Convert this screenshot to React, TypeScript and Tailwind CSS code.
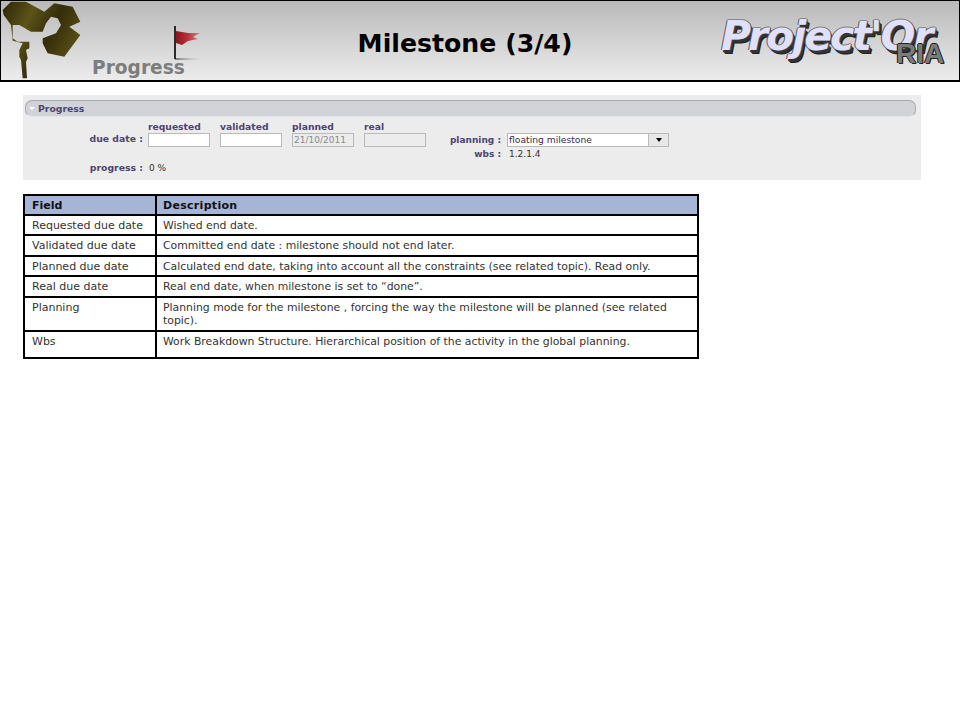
const rows: [string, string, string][] = [
  ["Requested due date", "Wished end date.", "h-[20px]"],
  ["Validated due date", "Committed end date : milestone should not end later.", "h-[21px]"],
  ["Planned due date", "Calculated end date, taking into account all the constraints (see related topic). Read only.", "h-[20px]"],
  ["Real due date", "Real end date, when milestone is set to “done”.", "h-[21px]"],
  ["Planning", "Planning mode for the milestone , forcing the way the milestone will be planned (see related topic).", "h-[34px]"],
  ["Wbs", "Work Breakdown Structure. Hierarchical position of the activity in the global planning.", "h-[27px]"],
];

function Spotlight() {
  return (
    <svg width="82" height="80" viewBox="0 0 240 240" className="shrink-0">
      <defs>
        <linearGradient id="sp" x1="0" y1="0" x2="1" y2="0.5">
          <stop offset="0" stopColor="#2a2408" />
          <stop offset="0.35" stopColor="#5c5318" />
          <stop offset="0.65" stopColor="#332d0a" />
          <stop offset="1" stopColor="#5a5016" />
        </linearGradient>
      </defs>
      <path
        fill="url(#sp)"
        d="M2 27 L27 2 L72 2 L127 32 L157 7 L212 17 L235 62 L202 77 L235 102 L187 167 L137 157 L132 147 L122 127 L122 112 L162 97 L177 72 L167 52 L147 47 L132 67 L122 92 L87 92 L52 72 L32 72 L32 112 L47 122 L82 122 L82 142 L72 147 L77 172 L72 182 L75 232 L62 232 L57 177 L52 167 L52 147 L62 127 L32 119 L27 72 L5 42 Z"
      />
    </svg>
  );
}

function Flag() {
  return (
    <svg width="30" height="36" viewBox="0 0 30 36" className="shrink-0">
      <defs>
        <linearGradient id="fl" x1="0" y1="0" x2="1" y2="0">
          <stop offset="0" stopColor="#8c141c" />
          <stop offset="0.5" stopColor="#b8353a" />
          <stop offset="1" stopColor="#d08a86" />
        </linearGradient>
        <linearGradient id="sh" x1="0" y1="0" x2="1" y2="0">
          <stop offset="0" stopColor="#777" />
          <stop offset="1" stopColor="#ccc" stopOpacity="0" />
        </linearGradient>
      </defs>
      <rect x="1" y="32" width="28" height="2" fill="url(#sh)" />
      <rect x="0" y="0" width="2" height="33" fill="#2b2b2b" />
      <path d="M2 5 L14 7 L26 7 L19 11 L24 13 L14 15 L8 19 L2 17 Z" fill="url(#fl)" />
    </svg>
  );
}

function Label({ children }: { children: React.ReactNode }) {
  return <div className="text-[9.2px] leading-[12px] font-bold text-[#4c4570] text-left">{children}</div>;
}

function FieldLabel({ children }: { children: React.ReactNode }) {
  return <div className="text-[9.3px] leading-[12px] font-bold text-[#4c4570] text-right pr-[5px]">{children}</div>;
}

export default function App() {
  return (
    <div className="w-[960px] h-[720px] bg-white overflow-hidden font-['DejaVu_Sans',sans-serif]">
      <header className="h-[82px] border border-black border-b-2 bg-gradient-to-b from-[#b9b9b9] to-[#ececec] flex items-start">
        <Spotlight />
        <div className="w-[125px] h-[80px] shrink-0">
          <div className="flex justify-end pr-[4px] pt-[25px]">
            <Flag />
          </div>
          <div className="text-[18.6px] leading-[22px] font-bold text-[#7d7d7d] ml-[9px] -mt-[5px]">Progress</div>
        </div>
        <h1 className="w-[340px] shrink-0 mt-[28px] ml-[87px] text-center text-[25.2px] leading-[30px] font-bold text-black">Milestone (3/4)</h1>
        <div className="relative ml-[86px] mt-[10px] w-[224px] h-[60px] shrink-0">
          <div className="text-[41px] leading-[50px] font-bold italic tracking-[-2px] text-[#e0e0fb] whitespace-nowrap [text-shadow:1px_0_0_#555,-1px_0_0_#555,0_-1px_0_#888,1px_2px_0_#333,2px_3px_0_#333,3px_4px_0_#222]">
            Project'Or
          </div>
          <div className="absolute left-[175px] top-[28px] text-[28px] leading-[30px] font-bold text-[#7b7b7b] [text-shadow:1px_1px_0_#222,-1px_0_0_#222,0_-1px_0_#222,1px_0_0_#222] font-['Liberation_Sans',sans-serif]">
            RIA
          </div>
        </div>
      </header>

      <main className="px-[23px] pt-[13px]">
        <section className="w-[898px] h-[85px] bg-[#ececec] pt-[5px] pl-[2px]">
          <div className="w-[891px] h-[17px] rounded-[7px] bg-[#d2d3d8] border border-[#a9aab0] border-b-[#e4e4e6] flex items-center">
            <span className="ml-[3px] w-0 h-0 border-x-[3px] border-x-transparent border-t-[3px] border-t-white" />
            <span className="ml-[3px] text-[9.3px] font-bold text-[#4c4570]">Progress</span>
          </div>
          <div className="-ml-[2px] mt-[4px] grid grid-cols-[125px_72px_72px_72px_72px_71px_162px] grid-rows-[12px_15px_14px_12px]">
            <div />
            <Label>requested</Label>
            <Label>validated</Label>
            <Label>planned</Label>
            <Label>real</Label>
            <div />
            <div />

            <FieldLabel>due date :</FieldLabel>
            <input className="w-[62px] h-[14px] bg-white border border-[#b9b9b9] outline-none" readOnly />
            <input className="w-[62px] h-[14px] bg-white border border-[#b9b9b9] outline-none" readOnly />
            <div className="w-[62px] h-[14px] bg-[#ececec] border border-[#b9b9b9] text-[9px] leading-[12px] text-[#8a8a8a] px-[1px]">21/10/2011</div>
            <div className="w-[62px] h-[14px] bg-[#ececec] border border-[#b9b9b9]" />
            <div className="text-[9px] leading-[14px] font-bold text-[#4c4570] text-right pr-[6px]">planning :</div>
            <div className="h-[14px] bg-white border border-[#b9b9b9] flex">
              <span className="flex-1 text-[9.2px] leading-[12px] px-[1px] text-[#3a2a50]">floating milestone</span>
              <span className="w-[20px] bg-[#e8e8e8] border-l border-[#b9b9b9] flex items-center justify-center">
                <span className="w-0 h-0 border-x-[3.5px] border-x-transparent border-t-[4px] border-t-black" />
              </span>
            </div>

            <div className="col-span-5" />
            <div className="text-[9px] leading-[13px] font-bold text-[#4c4570] text-right pr-[6px]">wbs :</div>
            <div className="text-[9px] leading-[13px] text-[#333] pl-[2px]">1.2.1.4</div>

            <FieldLabel>progress :</FieldLabel>
            <div className="text-[9px] leading-[12px] text-[#333] col-span-2 pl-[1px]">0 %</div>
          </div>
        </section>

        <table className="mt-[14px] w-[676px] table-fixed border-collapse border-2 border-black text-[11px] leading-[13px] text-[#333]">
          <colgroup>
            <col className="w-[132px]" />
            <col />
          </colgroup>
          <thead>
            <tr className="h-[20px] bg-[#a6b4d6]">
              <th className="border-2 border-black px-[7px] pt-[1px] text-left font-bold text-[#111]">Field</th>
              <th className="border-2 border-black px-[6px] pt-[1px] text-left font-bold text-[#111] tracking-[0.3px]">Description</th>
            </tr>
          </thead>
          <tbody>
            {rows.map(([f, d, h]) => (
              <tr key={f} className={h}>
                <td className="border-2 border-black px-[7px] pt-[3px] align-top">{f}</td>
                <td className="border-2 border-black px-[6px] pt-[3px] align-top text-[10.85px]">{d}</td>
              </tr>
            ))}
          </tbody>
        </table>
      </main>
    </div>
  );
}
